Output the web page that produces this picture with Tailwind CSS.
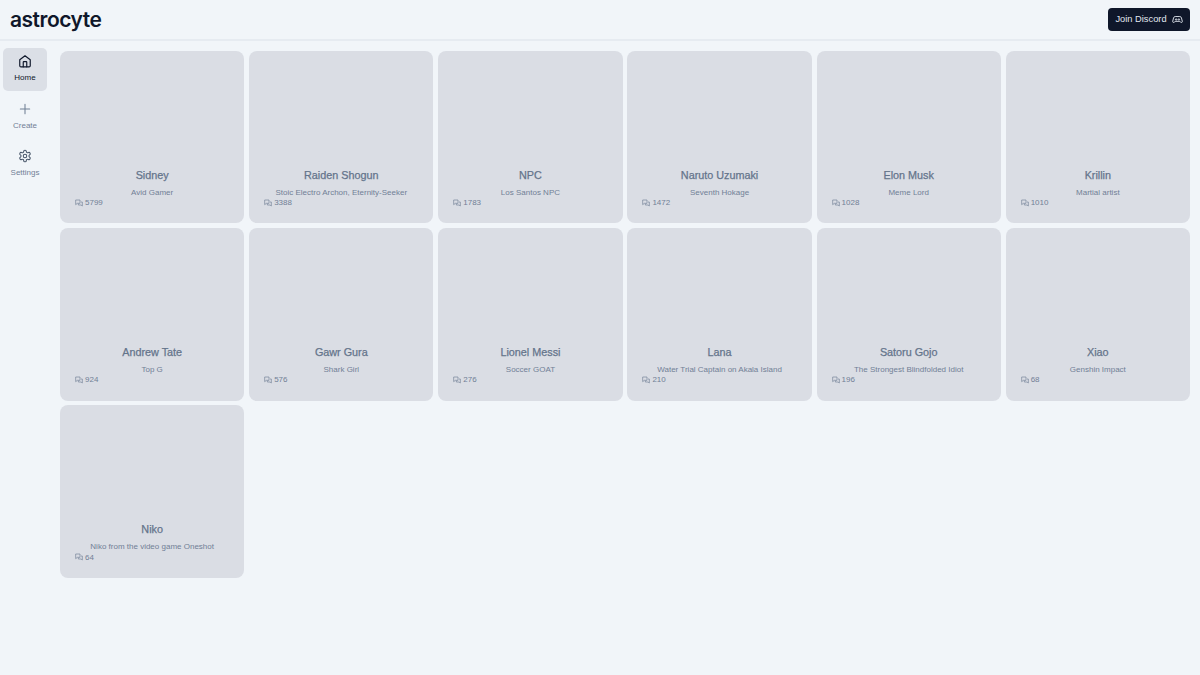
<!doctype html>
<html><head><meta charset="utf-8"><script src="https://cdn.jsdelivr.net/npm/@tailwindcss/browser@4"></script></head>
<body class="bg-[#f1f5f9] font-['Liberation_Sans',sans-serif] h-[675px] w-[1200px] overflow-hidden">
<header class="h-[41px] border-b-2 border-[#e6ebf1] flex items-center justify-between pl-[10px] pr-[10px]">
<span class="text-[21px] font-semibold font-['Inter',sans-serif] text-[#0f172a] leading-none tracking-[-0.5px]">astrocyte</span>
<button class="h-[23px] w-[82px] rounded-[4px] bg-[#0f172a] text-[#e2e8f0] text-[9.300px] flex items-center justify-center gap-[5px]">Join Discord
<svg class="w-[11px] h-[11px]" viewBox="0 0 24 24" fill="none" stroke="currentColor" stroke-width="2"><path d="M7 5.5h10c2 0 3 1 3.600 3L22.500 16c.3 1.500-.8 2.500-2 2.500-1.500 0-2.500-1-3.500-2.500H7c-1 1.500-2 2.500-3.500 2.500-1.200 0-2.300-1-2-2.500L3.400 8.500C4 6.500 5 5.500 7 5.500z"/><circle cx="9" cy="12" r="1.500"/><circle cx="15" cy="12" r="1.500"/></svg></button>
</header>
<div class="flex">
<nav class="w-[50px] pl-[3px] pt-[7px] flex flex-col gap-[5px] shrink-0">
<a class="w-[44px] h-[42.500px] rounded-[5px] bg-[#dbdfe6] flex flex-col items-center pt-[6px] text-[#0f172a] text-[8px] leading-[11px]">
<svg class="w-[14px] h-[14px] mb-[4px]" viewBox="0 0 24 24" fill="none" stroke="currentColor" stroke-width="2" stroke-linecap="round" stroke-linejoin="round"><path d="M3 10l9-7 9 7v10a2 2 0 0 1-2 2H5a2 2 0 0 1-2-2z"/><path d="M9 22v-8a1 1 0 0 1 1-1h4a1 1 0 0 1 1 1v8"/></svg>Home</a>
<a class="w-[44px] h-[42.500px] rounded-[5px] flex flex-col items-center pt-[6px] text-[#718096] text-[8px] leading-[11px]">
<svg class="w-[14px] h-[14px] mb-[4px]" viewBox="0 0 24 24" fill="none" stroke="currentColor" stroke-width="1.800" stroke-linecap="round"><path d="M12 4v16M4 12h16"/></svg>Create</a>
<a class="w-[44px] h-[42.500px] rounded-[5px] flex flex-col items-center pt-[6px] text-[#718096] text-[8px] leading-[11px]">
<svg class="w-[14px] h-[14px] mb-[4px] text-[#475569]" viewBox="0 0 24 24" fill="none" stroke="currentColor" stroke-width="1.800" stroke-linecap="round" stroke-linejoin="round"><path d="M12.220 2h-.440a2 2 0 0 0-2 2v.180a2 2 0 0 1-1 1.730l-.430.250a2 2 0 0 1-2 0l-.150-.080a2 2 0 0 0-2.730.730l-.220.380a2 2 0 0 0 .730 2.730l.150.100a2 2 0 0 1 1 1.720v.510a2 2 0 0 1-1 1.740l-.150.090a2 2 0 0 0-.730 2.730l.220.380a2 2 0 0 0 2.730.730l.150-.080a2 2 0 0 1 2 0l.430.250a2 2 0 0 1 1 1.730V20a2 2 0 0 0 2 2h.440a2 2 0 0 0 2-2v-.180a2 2 0 0 1 1-1.730l.430-.250a2 2 0 0 1 2 0l.150.080a2 2 0 0 0 2.730-.730l.220-.390a2 2 0 0 0-.730-2.730l-.150-.080a2 2 0 0 1-1-1.740v-.500a2 2 0 0 1 1-1.740l.150-.090a2 2 0 0 0 .730-2.730l-.220-.380a2 2 0 0 0-2.730-.730l-.150.080a2 2 0 0 1-2 0l-.430-.250a2 2 0 0 1-1-1.730V4a2 2 0 0 0-2-2z"/><circle cx="12" cy="12" r="3"/></svg>Settings</a>
</nav>
<main class="w-[1130px] ml-[10px] mt-[9.500px] grid grid-cols-6 gap-x-[4.800px] gap-y-[4.900px] content-start text-[#718096]">
<div class="h-[172.600px] rounded-[8px] bg-[#dadde4] flex flex-col items-center"><p class="mt-[116px] text-[10.800px] [-webkit-text-stroke:0.25px] leading-[16px] text-[#64748b]">Sidney</p><p class="mt-[4px] text-[8px] leading-[12px]">Avid Gamer</p><p class="self-start ml-[15px] mt-[-1.500px] text-[8px] leading-[11px] flex items-center gap-[2px]"><svg class="w-[8px] h-[8px]" viewBox="0 0 24 24" fill="none" stroke="currentColor" stroke-width="2"><path d="M2 3h13v10H7l-5 4zM18 9h4v12l-4-3H10v-4"/></svg>5799</p></div>
<div class="h-[172.600px] rounded-[8px] bg-[#dadde4] flex flex-col items-center"><p class="mt-[116px] text-[10.800px] [-webkit-text-stroke:0.25px] leading-[16px] text-[#64748b]">Raiden Shogun</p><p class="mt-[4px] text-[8px] leading-[12px]">Stoic Electro Archon, Eternity-Seeker</p><p class="self-start ml-[15px] mt-[-1.500px] text-[8px] leading-[11px] flex items-center gap-[2px]"><svg class="w-[8px] h-[8px]" viewBox="0 0 24 24" fill="none" stroke="currentColor" stroke-width="2"><path d="M2 3h13v10H7l-5 4zM18 9h4v12l-4-3H10v-4"/></svg>3388</p></div>
<div class="h-[172.600px] rounded-[8px] bg-[#dadde4] flex flex-col items-center"><p class="mt-[116px] text-[10.800px] [-webkit-text-stroke:0.25px] leading-[16px] text-[#64748b]">NPC</p><p class="mt-[4px] text-[8px] leading-[12px]">Los Santos NPC</p><p class="self-start ml-[15px] mt-[-1.500px] text-[8px] leading-[11px] flex items-center gap-[2px]"><svg class="w-[8px] h-[8px]" viewBox="0 0 24 24" fill="none" stroke="currentColor" stroke-width="2"><path d="M2 3h13v10H7l-5 4zM18 9h4v12l-4-3H10v-4"/></svg>1783</p></div>
<div class="h-[172.600px] rounded-[8px] bg-[#dadde4] flex flex-col items-center"><p class="mt-[116px] text-[10.800px] [-webkit-text-stroke:0.25px] leading-[16px] text-[#64748b]">Naruto Uzumaki</p><p class="mt-[4px] text-[8px] leading-[12px]">Seventh Hokage</p><p class="self-start ml-[15px] mt-[-1.500px] text-[8px] leading-[11px] flex items-center gap-[2px]"><svg class="w-[8px] h-[8px]" viewBox="0 0 24 24" fill="none" stroke="currentColor" stroke-width="2"><path d="M2 3h13v10H7l-5 4zM18 9h4v12l-4-3H10v-4"/></svg>1472</p></div>
<div class="h-[172.600px] rounded-[8px] bg-[#dadde4] flex flex-col items-center"><p class="mt-[116px] text-[10.800px] [-webkit-text-stroke:0.25px] leading-[16px] text-[#64748b]">Elon Musk</p><p class="mt-[4px] text-[8px] leading-[12px]">Meme Lord</p><p class="self-start ml-[15px] mt-[-1.500px] text-[8px] leading-[11px] flex items-center gap-[2px]"><svg class="w-[8px] h-[8px]" viewBox="0 0 24 24" fill="none" stroke="currentColor" stroke-width="2"><path d="M2 3h13v10H7l-5 4zM18 9h4v12l-4-3H10v-4"/></svg>1028</p></div>
<div class="h-[172.600px] rounded-[8px] bg-[#dadde4] flex flex-col items-center"><p class="mt-[116px] text-[10.800px] [-webkit-text-stroke:0.25px] leading-[16px] text-[#64748b]">Krillin</p><p class="mt-[4px] text-[8px] leading-[12px]">Martial artist</p><p class="self-start ml-[15px] mt-[-1.500px] text-[8px] leading-[11px] flex items-center gap-[2px]"><svg class="w-[8px] h-[8px]" viewBox="0 0 24 24" fill="none" stroke="currentColor" stroke-width="2"><path d="M2 3h13v10H7l-5 4zM18 9h4v12l-4-3H10v-4"/></svg>1010</p></div>
<div class="h-[172.600px] rounded-[8px] bg-[#dadde4] flex flex-col items-center"><p class="mt-[116px] text-[10.800px] [-webkit-text-stroke:0.25px] leading-[16px] text-[#64748b]">Andrew Tate</p><p class="mt-[4px] text-[8px] leading-[12px]">Top G</p><p class="self-start ml-[15px] mt-[-1.500px] text-[8px] leading-[11px] flex items-center gap-[2px]"><svg class="w-[8px] h-[8px]" viewBox="0 0 24 24" fill="none" stroke="currentColor" stroke-width="2"><path d="M2 3h13v10H7l-5 4zM18 9h4v12l-4-3H10v-4"/></svg>924</p></div>
<div class="h-[172.600px] rounded-[8px] bg-[#dadde4] flex flex-col items-center"><p class="mt-[116px] text-[10.800px] [-webkit-text-stroke:0.25px] leading-[16px] text-[#64748b]">Gawr Gura</p><p class="mt-[4px] text-[8px] leading-[12px]">Shark Girl</p><p class="self-start ml-[15px] mt-[-1.500px] text-[8px] leading-[11px] flex items-center gap-[2px]"><svg class="w-[8px] h-[8px]" viewBox="0 0 24 24" fill="none" stroke="currentColor" stroke-width="2"><path d="M2 3h13v10H7l-5 4zM18 9h4v12l-4-3H10v-4"/></svg>576</p></div>
<div class="h-[172.600px] rounded-[8px] bg-[#dadde4] flex flex-col items-center"><p class="mt-[116px] text-[10.800px] [-webkit-text-stroke:0.25px] leading-[16px] text-[#64748b]">Lionel Messi</p><p class="mt-[4px] text-[8px] leading-[12px]">Soccer GOAT</p><p class="self-start ml-[15px] mt-[-1.500px] text-[8px] leading-[11px] flex items-center gap-[2px]"><svg class="w-[8px] h-[8px]" viewBox="0 0 24 24" fill="none" stroke="currentColor" stroke-width="2"><path d="M2 3h13v10H7l-5 4zM18 9h4v12l-4-3H10v-4"/></svg>276</p></div>
<div class="h-[172.600px] rounded-[8px] bg-[#dadde4] flex flex-col items-center"><p class="mt-[116px] text-[10.800px] [-webkit-text-stroke:0.25px] leading-[16px] text-[#64748b]">Lana</p><p class="mt-[4px] text-[8px] leading-[12px]">Water Trial Captain on Akala Island</p><p class="self-start ml-[15px] mt-[-1.500px] text-[8px] leading-[11px] flex items-center gap-[2px]"><svg class="w-[8px] h-[8px]" viewBox="0 0 24 24" fill="none" stroke="currentColor" stroke-width="2"><path d="M2 3h13v10H7l-5 4zM18 9h4v12l-4-3H10v-4"/></svg>210</p></div>
<div class="h-[172.600px] rounded-[8px] bg-[#dadde4] flex flex-col items-center"><p class="mt-[116px] text-[10.800px] [-webkit-text-stroke:0.25px] leading-[16px] text-[#64748b]">Satoru Gojo</p><p class="mt-[4px] text-[8px] leading-[12px]">The Strongest Blindfolded Idiot</p><p class="self-start ml-[15px] mt-[-1.500px] text-[8px] leading-[11px] flex items-center gap-[2px]"><svg class="w-[8px] h-[8px]" viewBox="0 0 24 24" fill="none" stroke="currentColor" stroke-width="2"><path d="M2 3h13v10H7l-5 4zM18 9h4v12l-4-3H10v-4"/></svg>196</p></div>
<div class="h-[172.600px] rounded-[8px] bg-[#dadde4] flex flex-col items-center"><p class="mt-[116px] text-[10.800px] [-webkit-text-stroke:0.25px] leading-[16px] text-[#64748b]">Xiao</p><p class="mt-[4px] text-[8px] leading-[12px]">Genshin Impact</p><p class="self-start ml-[15px] mt-[-1.500px] text-[8px] leading-[11px] flex items-center gap-[2px]"><svg class="w-[8px] h-[8px]" viewBox="0 0 24 24" fill="none" stroke="currentColor" stroke-width="2"><path d="M2 3h13v10H7l-5 4zM18 9h4v12l-4-3H10v-4"/></svg>68</p></div>
<div class="h-[172.600px] rounded-[8px] bg-[#dadde4] flex flex-col items-center"><p class="mt-[116px] text-[10.800px] [-webkit-text-stroke:0.25px] leading-[16px] text-[#64748b]">Niko</p><p class="mt-[4px] text-[8px] leading-[12px]">Niko from the video game Oneshot</p><p class="self-start ml-[15px] mt-[-1.500px] text-[8px] leading-[11px] flex items-center gap-[2px]"><svg class="w-[8px] h-[8px]" viewBox="0 0 24 24" fill="none" stroke="currentColor" stroke-width="2"><path d="M2 3h13v10H7l-5 4zM18 9h4v12l-4-3H10v-4"/></svg>64</p></div>
</main>
</div>
</body></html>
